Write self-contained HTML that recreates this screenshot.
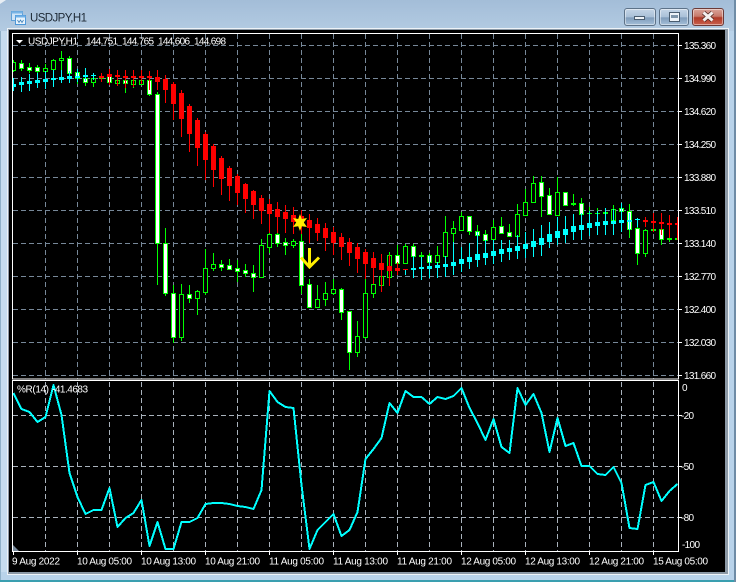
<!DOCTYPE html>
<html><head><meta charset="utf-8"><style>
html,body{margin:0;padding:0;width:736px;height:582px;overflow:hidden;background:#b9d3ea}
svg{display:block}
text{font-family:"Liberation Sans",sans-serif;fill:#fff;font-size:10px}
.c{shape-rendering:crispEdges}
.b{position:absolute;top:8px;height:18px;box-sizing:border-box;border:1px solid #5d7288;border-radius:3px;box-shadow:inset 0 0 0 1px rgba(255,255,255,.45)}
</style></head><body>
<svg width="736" height="582" viewBox="0 0 736 582" xmlns="http://www.w3.org/2000/svg" style="position:absolute;left:0;top:0">
<defs>
<linearGradient id="t" x1="0" y1="0" x2="0" y2="1"><stop offset="0" stop-color="#a3bdd8"/><stop offset="1" stop-color="#b3cbe2"/></linearGradient>
<clipPath id="m"><rect x="13" y="34" width="665" height="345"/></clipPath>
<clipPath id="s"><rect x="13" y="382" width="665" height="169"/></clipPath>
</defs>
<rect width="736" height="582" fill="#b9d3ea"/>
<rect width="736" height="31" fill="url(#t)"/>
<path d="M0 0H6L0 4Z" fill="#e8eef4"/>
<rect x="0" y="31" width="1" height="551" fill="#8fb0c8"/>
<rect x="1" y="31" width="6" height="541" fill="#c6dcef"/>
<rect x="7" y="28" width="722" height="547" fill="#eef3f8"/>
<rect x="8" y="29" width="720" height="545" fill="#8c99a6"/>
<rect x="9" y="30" width="716" height="542" fill="#000"/>
<rect x="0" y="580" width="736" height="2" fill="#3a9fb0"/>
<rect x="734" y="0" width="2" height="582" fill="#6f8ca6"/>
<!-- title icon -->
<g class="c"><rect x="11.5" y="11.5" width="11" height="9" fill="#cfe4f7" stroke="#5f9fd6"/><rect x="11.5" y="11.5" width="11" height="2" fill="#79b4e6"/><rect x="15.5" y="15.5" width="10" height="9" fill="#e8f3fc" stroke="#4d97d8"/><rect x="15.5" y="15.5" width="10" height="2" fill="#6fb0e8"/></g>
<path d="M17.5 20l1.5 2.500 1.500-2.500 1.500 2.500 1.500-2.500" fill="none" stroke="#3c7fb8" stroke-width=".8"/>
<text x="30" y="21.500" textLength="57" style="font-size:11.500px;fill:#1e2a36">USDJPY,H1</text>

<!-- grid -->
<g stroke="#778899" stroke-dasharray="5 3" fill="none">
<path d="M13 45.500H678M13 78.500H678M13 111.500H678M13 144.500H678M13 177.500H678M13 210.500H678M13 243.500H678M13 276.500H678M13 309.500H678M13 342.500H678M13 375.500H678"/>
<path d="M45.500 34V379M77.500 34V379M109.500 34V379M141.500 34V379M173.500 34V379M205.500 34V379M237.500 34V379M269.500 34V379M301.500 34V379M333.500 34V379M365.500 34V379M397.500 34V379M429.500 34V379M461.500 34V379M493.500 34V379M525.500 34V379M557.500 34V379M589.500 34V379M621.500 34V379M653.500 34V379"/>
</g>
<g stroke="#a9b2bc" stroke-dasharray="5 3" fill="none">
<path d="M13 415.500H678M13 466.500H678M13 517.500H678"/>
<path d="M45.500 382V551M77.500 382V551M109.500 382V551M141.500 382V551M173.500 382V551M205.500 382V551M237.500 382V551M269.500 382V551M301.500 382V551M333.500 382V551M365.500 382V551M397.500 382V551M429.500 382V551M461.500 382V551M493.500 382V551M525.500 382V551M557.500 382V551M589.500 382V551M621.500 382V551M653.500 382V551"/>
</g>

<g clip-path="url(#m)">
<!-- main wicks -->
<path fill="none" stroke="#00ff00" stroke-width="1" d="M13.500 60V72M21.500 60V71M29.500 63V73M37.500 65V75M45.500 64V80M53.500 59V76M61.500 51V71M69.500 56V80M77.500 69V84M85.500 75V86M93.500 76V87M101.500 76V82M109.500 72V85M117.500 76V86M125.500 76V93M133.500 76V88M141.500 78V84M149.500 78V96M157.500 92V285M165.500 228V296M173.500 285V343M181.500 284V341M189.500 285V303M197.500 290V315M205.500 249V295M213.500 253V271M221.500 260V271M229.500 259V269M237.500 260V282M245.500 264V277M253.500 265V292M261.500 239V278M269.500 228V253M277.500 231V247M285.500 238V255M293.500 239V248M301.500 225V294M309.500 279V308M317.500 285V307M325.500 282V306M333.500 279V295M341.500 288V320M349.500 311V370M357.500 321V357M365.500 279V339M373.500 268V298M381.500 268V292M389.500 252V278M397.500 245V264M405.500 244V264M413.500 244V258M421.500 252V260M429.500 253V266M437.500 246V264M445.500 216V257M453.500 221V242M461.500 212V231M469.500 216V235M477.500 225V236M485.500 230V241M493.500 220V241M501.500 217V234M509.500 224V237M517.500 204V237M525.500 189V216M533.500 176V203M541.500 176V217M549.500 188V215M557.500 177V216M565.500 192V206M573.500 194V206M581.500 198V215M589.500 207V214M597.500 208V214M605.500 208V214M613.500 205V221M621.500 203V212M629.500 204V238M637.500 222V265M645.500 229V257M653.500 225V231M661.500 215V245M669.500 232V242M677.500 232V240"/>
<!-- black bodies -->
<path fill="#000" stroke="#00ff00" stroke-width="1" d="M11.500 62.500h4V70.500h-4zM43.500 68.500h4V71.500h-4zM51.500 60.500h4V69.500h-4zM59.500 58.500h4V60.500h-4zM91.500 78.500h4V82.500h-4zM115.500 80.500h4V83.500h-4zM131.500 80.500h4V84.500h-4zM139.500 80.500h4V84.500h-4zM179.500 294.500h4V337.500h-4zM195.500 291.500h4V298.500h-4zM203.500 268.500h4V292.500h-4zM211.500 264.500h4V268.500h-4zM259.500 245.500h4V277.500h-4zM267.500 234.500h4V247.500h-4zM291.500 241.500h4V245.500h-4zM315.500 299.500h4V307.500h-4zM323.500 293.500h4V299.500h-4zM331.500 289.500h4V293.500h-4zM355.500 336.500h4V352.500h-4zM363.500 293.500h4V337.500h-4zM371.500 284.500h4V293.500h-4zM379.500 276.500h4V285.500h-4zM387.500 255.500h4V277.500h-4zM403.500 246.500h4V263.500h-4zM435.500 255.500h4V262.500h-4zM443.500 232.500h4V256.500h-4zM451.500 228.500h4V233.500h-4zM459.500 216.500h4V230.500h-4zM491.500 227.500h4V239.500h-4zM515.500 214.500h4V236.500h-4zM523.500 202.500h4V215.500h-4zM531.500 183.500h4V202.500h-4zM555.500 192.500h4V215.500h-4zM611.500 209.500h4V220.500h-4zM643.500 230.500h4V253.500h-4z"/>
<!-- white bodies -->
<path fill="#fff" stroke="#00ff00" stroke-width="1" d="M19.500 63.500h4V68.500h-4zM27.500 67.500h4V70.500h-4zM35.500 67.500h4V71.500h-4zM67.500 58.500h4V73.500h-4zM75.500 72.500h4V78.500h-4zM83.500 78.500h4V82.500h-4zM107.500 75.500h4V82.500h-4zM123.500 80.500h4V83.500h-4zM147.500 80.500h4V94.500h-4zM155.500 94.500h4V243.500h-4zM163.500 243.500h4V293.500h-4zM171.500 293.500h4V337.500h-4zM187.500 294.500h4V298.500h-4zM219.500 264.500h4V267.500h-4zM227.500 265.500h4V269.500h-4zM235.500 268.500h4V271.500h-4zM243.500 270.500h4V273.500h-4zM251.500 273.500h4V277.500h-4zM275.500 234.500h4V243.500h-4zM283.500 242.500h4V245.500h-4zM299.500 241.500h4V285.500h-4zM307.500 284.500h4V307.500h-4zM339.500 289.500h4V312.500h-4zM347.500 311.500h4V352.500h-4zM395.500 255.500h4V263.500h-4zM411.500 246.500h4V256.500h-4zM427.500 255.500h4V262.500h-4zM467.500 216.500h4V231.500h-4zM475.500 231.500h4V235.500h-4zM483.500 234.500h4V240.500h-4zM499.500 226.500h4V233.500h-4zM507.500 232.500h4V236.500h-4zM539.500 182.500h4V196.500h-4zM547.500 195.500h4V214.500h-4zM563.500 192.500h4V205.500h-4zM579.500 203.500h4V214.500h-4zM619.500 208.500h4V211.500h-4zM627.500 211.500h4V229.500h-4zM635.500 228.500h4V253.500h-4zM659.500 229.500h4V239.500h-4z"/>
<!-- doji -->
<path fill="#00ff00" d="M99 77h5v2h-5zM419 255h5v2h-5zM571 203h5v2h-5zM587 213h5v1h-5zM595 213h5v1h-5zM603 212h5v2h-5zM651 229h5v2h-5zM667 238h5v2h-5zM675 238h5v2h-5z"/>
<!-- cyan indicator -->
<path fill="none" stroke="#00ffff" stroke-width="1" d="M13.500 78V91M21.500 77V92M29.500 74V91M37.500 73V88M45.500 71V89M53.500 70V87M61.500 70V83M69.500 71V83M77.500 69V82M85.500 68V81M93.500 73V80M405.500 270V275M413.500 256V278M421.500 257V280M429.500 256V278M437.500 262V278M445.500 256V277M453.500 242V275M461.500 247V272M469.500 243V269M477.500 232V267M485.500 240V265M493.500 240V264M501.500 240V262M509.500 240V260M517.500 235V259M525.500 232V258M533.500 229V257M541.500 225V256M549.500 222V248M557.500 217V245M565.500 216V243M573.500 214V240M581.500 213V240M589.500 211V236M597.500 211V235M605.500 208V235M613.500 209V235M621.500 203V232M629.500 213V230M637.500 218V227"/>
<path fill="#00ffff" d="M11 84h5v3h-5zM19 82h5v3h-5zM27 81h5v3h-5zM35 80h5v3h-5zM43 79h5v3h-5zM51 78h5v2h-5zM59 77h5v3h-5zM67 76h5v3h-5zM75 76h5v2h-5zM83 75h5v2h-5zM91 75h5v1h-5zM411 268h5v2h-5zM419 267h5v2h-5zM427 266h5v3h-5zM435 265h5v3h-5zM443 264h5v3h-5zM451 262h5v4h-5zM459 259h5v5h-5zM467 257h5v5h-5zM475 254h5v6h-5zM483 253h5v5h-5zM491 251h5v5h-5zM499 249h5v5h-5zM507 248h5v4h-5zM515 246h5v5h-5zM523 244h5v5h-5zM531 241h5v6h-5zM539 238h5v7h-5zM547 234h5v8h-5zM555 231h5v7h-5zM563 229h5v6h-5zM571 226h5v6h-5zM579 225h5v5h-5zM587 223h5v5h-5zM595 222h5v4h-5zM603 221h5v4h-5zM611 221h5v3h-5zM619 220h5v3h-5zM627 220h5v2h-5zM635 219h5v1h-5z"/>
<!-- red indicator -->
<path fill="none" stroke="#ff0000" stroke-width="1" d="M101.500 73V82M109.500 69V85M117.500 70V86M125.500 70V88M133.500 70V87M141.500 70V84M149.500 71V90M157.500 70V90M165.500 75V103M173.500 82V120M181.500 90V137M189.500 104V152M197.500 118V166M205.500 132V180M213.500 144V187M221.500 156V195M229.500 166V201M237.500 174V205M245.500 183V213M253.500 190V219M261.500 195V224M269.500 199V233M277.500 202V233M285.500 205V233M293.500 207V234M301.500 210V234M309.500 214V243M317.500 218V241M325.500 223V251M333.500 227V255M341.500 233V260M349.500 238V266M357.500 243V273M365.500 249V279M373.500 252V284M381.500 254V292M389.500 255V286M397.500 262V275M645.500 217V227M653.500 213V232M661.500 213V235M669.500 215V238M677.500 217V240"/>
<path fill="#ff0000" d="M99 76h5v2h-5zM107 74h5v3h-5zM115 75h5v2h-5zM123 76h5v2h-5zM131 76h5v2h-5zM139 76h5v2h-5zM147 76h5v2h-5zM155 77h5v5h-5zM163 79h5v11h-5zM171 84h5v20h-5zM179 93h5v26h-5zM187 106h5v28h-5zM195 120h5v28h-5zM203 134h5v26h-5zM211 146h5v24h-5zM219 158h5v21h-5zM227 168h5v18h-5zM235 176h5v17h-5zM243 184h5v15h-5zM251 191h5v14h-5zM259 198h5v13h-5zM267 204h5v10h-5zM275 209h5v8h-5zM283 212h5v7h-5zM291 215h5v7h-5zM299 216h5v9h-5zM307 220h5v8h-5zM315 224h5v9h-5zM323 228h5v10h-5zM331 232h5v11h-5zM339 237h5v10h-5zM347 242h5v11h-5zM355 247h5v12h-5zM363 252h5v12h-5zM371 258h5v10h-5zM379 263h5v7h-5zM387 266h5v5h-5zM395 268h5v3h-5zM403 269h5v1h-5zM643 220h5v2h-5zM651 221h5v2h-5zM659 222h5v2h-5zM667 223h5v2h-5zM675 223h5v2h-5z"/>
</g>
<!-- star and arrow -->
<path d="M300 214l1.800 5 5.200-1-3.200 4.500 3.200 4.500-5.200-.8-1.800 4.800-1.800-4.800-5.200.8 3.200-4.500-3.200-4.500 5.200 1z" fill="#ffee00"/>
<path d="M309.500 248V267M301 257.500l8.500 9.500 9.500-9.500" fill="none" stroke="#ffee00" stroke-width="3"/>

<!-- WPR -->
<g clip-path="url(#s)">
<polyline class="c" fill="none" stroke="#00ffff" stroke-width="2" stroke-linejoin="round" points="13.500,393 21.500,409 29.500,412 37.500,422 45.500,417 53.500,385 61.500,415 69.500,473 77.500,497 85.500,514 93.500,510 101.500,510 109.500,488 117.500,527 125.500,518 133.500,513 141.500,500 149.500,546 157.500,522 165.500,549 173.500,549 181.500,522 189.500,522 197.500,518 205.500,504 213.500,503 221.500,503 229.500,504 237.500,506 245.500,507 253.500,509 261.500,490 269.500,391 277.500,402 285.500,407 293.500,408 301.500,485 309.500,549 317.500,530 325.500,522 333.500,514 341.500,536 349.500,530 357.500,512 365.500,459 373.500,449 381.500,438 389.500,403 397.500,413 405.500,391 413.500,397 421.500,397 429.500,404 437.500,397 445.500,399 453.500,396 461.500,388 469.500,408 477.500,423 485.500,440 493.500,419 501.500,447 509.500,453 517.500,388 525.500,405 533.500,394 541.500,413 549.500,452 557.500,418 565.500,446 573.500,443 581.500,466 589.500,466 597.500,474 605.500,475 613.500,467 621.500,483 629.500,528 637.500,529 645.500,485 653.500,482 661.500,501 669.500,491 677.500,484"/>
</g>
<path d="M13 545l6 6h-6z" fill="#778899"/>

<!-- borders & ticks -->
<g fill="none" stroke="#fff">
<rect x="12.500" y="33.500" width="666" height="345.500"/>
<rect x="12.500" y="380.500" width="666" height="171"/>
<path d="M679 45.500h3M679 78.500h3M679 111.500h3M679 144.500h3M679 177.500h3M679 210.500h3M679 243.500h3M679 276.500h3M679 309.500h3M679 342.500h3M679 375.500h3M679 415.500h3M679 466.500h3M679 517.500h3"/>
<path d="M13.500 552v3M77.500 552v3M141.500 552v3M205.500 552v3M269.500 552v3M333.500 552v3M397.500 552v3M461.500 552v3M525.500 552v3M589.500 552v3M653.500 552v3"/>
</g>
<path d="M16 40h7l-3.500 3.500z" fill="#fff"/>

<!-- text -->
<text x="28" y="44.500" textLength="50">USDJPY,H1</text>
<text x="86" y="44.500" textLength="32">144.751</text>
<text x="122" y="44.500" textLength="32">144.765</text>
<text x="158" y="44.500" textLength="32">144.606</text>
<text x="194" y="44.500" textLength="32">144.698</text>
<text x="17" y="392.500" textLength="32">%R(14)</text>
<text x="52" y="392.500" textLength="36">-41.4683</text>
<g>
<text x="684" y="49" textLength="32">135.360</text>
<text x="684" y="82" textLength="32">134.990</text>
<text x="684" y="115" textLength="32">134.620</text>
<text x="684" y="148" textLength="32">134.250</text>
<text x="684" y="181" textLength="32">133.880</text>
<text x="684" y="214" textLength="32">133.510</text>
<text x="684" y="247" textLength="32">133.140</text>
<text x="684" y="280" textLength="32">132.770</text>
<text x="684" y="313" textLength="32">132.400</text>
<text x="684" y="346" textLength="32">132.030</text>
<text x="684" y="379" textLength="32">131.660</text>
<text x="682" y="391">0</text>
<text x="681" y="419" textLength="13">-20</text>
<text x="681" y="470" textLength="13">-50</text>
<text x="681" y="521" textLength="13">-80</text>
<text x="682" y="548" textLength="18">-100</text>
<text x="12" y="564.500" textLength="48">9 Aug 2022</text>
<text x="77" y="564.500" textLength="55">10 Aug 05:00</text>
<text x="141" y="564.500" textLength="55">10 Aug 13:00</text>
<text x="205" y="564.500" textLength="55">10 Aug 21:00</text>
<text x="269" y="564.500" textLength="55">11 Aug 05:00</text>
<text x="333" y="564.500" textLength="55">11 Aug 13:00</text>
<text x="397" y="564.500" textLength="55">11 Aug 21:00</text>
<text x="461" y="564.500" textLength="55">12 Aug 05:00</text>
<text x="525" y="564.500" textLength="55">12 Aug 13:00</text>
<text x="589" y="564.500" textLength="55">12 Aug 21:00</text>
<text x="653" y="564.500" textLength="55">15 Aug 05:00</text>
</g>
</svg>
<div class="b" style="left:624px;width:32px;background:linear-gradient(#c4d5e6 0,#a9c0d8 50%,#7f9cba 55%,#a5bfd8 100%)"><div style="position:absolute;left:9px;top:7px;width:11px;height:4px;background:#eef3f8;border:1px solid #4a5d70;box-sizing:border-box"></div></div>
<div class="b" style="left:659px;width:30px;background:linear-gradient(#c4d5e6 0,#a9c0d8 50%,#7f9cba 55%,#a5bfd8 100%)"><div style="position:absolute;left:9px;top:3px;width:11px;height:10px;background:#eef3f8;border:1px solid #4a5d70;box-sizing:border-box"><div style="margin:2px 1px;height:3px;background:#7f95aa;border:0"></div></div></div>
<div class="b" style="left:692px;width:32px;border-color:#6b3a38;background:linear-gradient(#d9a49a 0,#c77a6c 45%,#b03a28 55%,#c9604c 100%)">
<svg width="30" height="16" style="position:absolute;left:0;top:0"><path d="M10.500 3.500l9 8M19.500 3.500l-9 8" stroke="#4a2520" stroke-width="4.500" fill="none"/><path d="M10.500 3.500l9 8M19.500 3.500l-9 8" stroke="#f4f0ee" stroke-width="3" fill="none"/></svg>
</div>
</body></html>
